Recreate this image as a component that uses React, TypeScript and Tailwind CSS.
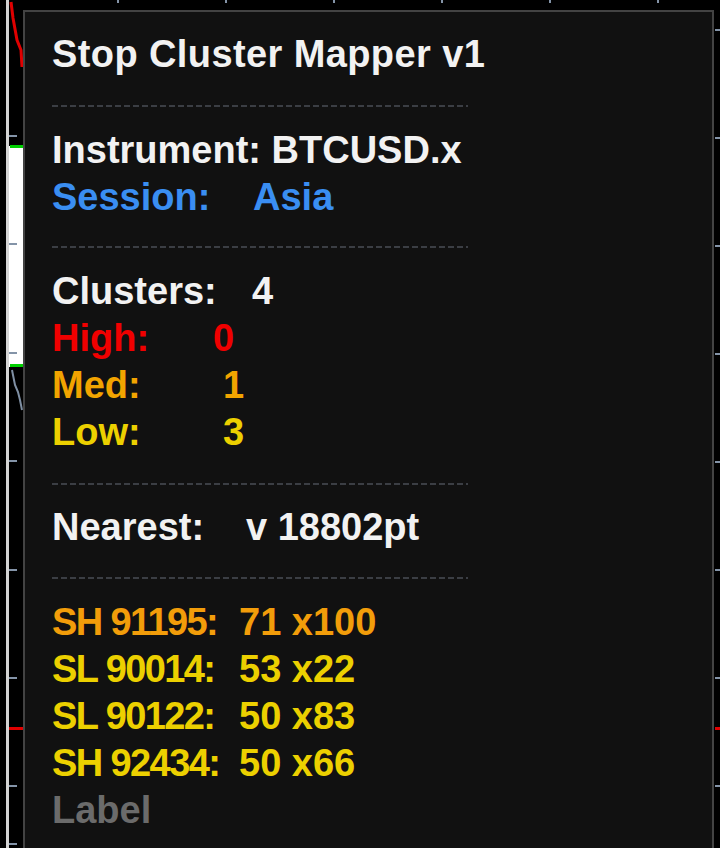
const TICKS_Y = [135, 243, 352, 460, 569, 677, 785, 843];
const TICKS_RIGHT = [29, 137, 245, 353, 461, 569, 677, 785];
const TICKS_TOP = [117, 225, 333, 441, 549, 657];

function ChartBackdrop() {
    return (
        <svg className="absolute inset-0" width={720} height={848} viewBox="0 0 720 848">
            {/* left price axis line */}
            <rect x={6} y={0} width={3} height={848} fill="#d4d4d4" />
            {/* red trend segment */}
            <polyline points="11,2 13,18 17,40 21,50 22,67" fill="none" stroke="#e00000" strokeWidth={3} />
            {/* candle body */}
            <rect x={9} y={146} width={14} height={221} fill="#ffffff" />
            <rect x={10} y={145} width={13} height={3} fill="#00d000" />
            <rect x={10} y={364} width={13} height={3} fill="#00d000" />
            <polyline points="12,370 15,385 18,392 20,400 22,410" fill="none" stroke="#7f8fa3" strokeWidth={2} />
            {TICKS_Y.map((y) => (
                <rect key={y} x={9} y={y} width={8} height={2} fill="#8494a8" />
            ))}
            <rect x={9} y={727} width={15} height={3} fill="#e00000" />
            {TICKS_RIGHT.map((y) => (
                <rect key={y} x={715} y={y} width={5} height={2} fill="#8494a8" />
            ))}
            <rect x={715} y={727} width={5} height={3} fill="#e00000" />
            {TICKS_TOP.map((x) => (
                <rect key={x} x={x} y={0} width={2} height={3} fill="#8494a8" />
            ))}
        </svg>
    );
}

function Separator({ h = 48, top = 26 }: { h?: number; top?: number }) {
    return (
        <div style={{ height: h, paddingTop: top }}>
            <div className="h-[2px] w-[416px] bg-[repeating-linear-gradient(90deg,#3b3e44_0_6px,transparent_6px_9px)]" />
        </div>
    );
}

function Row({ label, value, labelW, color, tight }: { label: string; value?: string; labelW?: number; color: string; tight?: boolean }) {
    return (
        <div className={`flex h-[47px] items-center whitespace-pre ${color}`}>
            <span style={labelW ? { width: labelW } : undefined} className={`shrink-0 ${tight ? "tracking-[-1.6px]" : ""}`}>
                {label}
            </span>
            {value && <span>{value}</span>}
        </div>
    );
}

export default function App() {
    const stops = [
        { label: "SH 91195:", value: "71 x100", color: "text-[#f29d0a]" },
        { label: "SL 90014:", value: "53 x22", color: "text-[#ecd000]" },
        { label: "SL 90122:", value: "50 x83", color: "text-[#ecd000]" },
        { label: "SH 92434:", value: "50 x66", color: "text-[#ecd000]" },
    ];

    return (
        <div className="relative w-[720px] h-[848px] overflow-hidden bg-black font-['Liberation_Sans',Arial,sans-serif] font-bold text-[38px] leading-[47px]">
            <ChartBackdrop />

            {/* indicator info panel */}
            <div className="absolute left-[23px] top-[10px] w-[691px] h-[860px] border-[2px] border-[#434343] bg-[#111111] pl-[27px] pt-[19px]">
                <div className="h-[47px] flex items-center text-[#f2f2f2] tracking-[0.4px]">Stop Cluster Mapper v1</div>
                <Separator h={49} top={27} />
                <Row label="Instrument: BTCUSD.x" color="text-[#f2f2f2]" />
                <Row label="Session:" value="Asia" labelW={201} color="text-[#3a8ef2]" />
                <Separator h={47} top={25} />
                <Row label="Clusters:" value="4" labelW={200} color="text-[#f2f2f2]" />
                <Row label="High:" value="0" labelW={161} color="text-[#f00000]" />
                <Row label="Med:" value="1" labelW={171} color="text-[#f2a400]" />
                <Row label="Low:" value="3" labelW={171} color="text-[#ecd000]" />
                <Separator h={48} top={27} />
                <Row label="Nearest:" value="v 18802pt" labelW={194} color="text-[#f2f2f2]" />
                <Separator h={48} top={26} />
                {stops.map((s) => (
                    <Row key={s.label} label={s.label} value={s.value} labelW={187} color={s.color} tight />
                ))}
                <Row label="Label" color="text-[#6b6b6b]" />
            </div>
        </div>
    );
}
